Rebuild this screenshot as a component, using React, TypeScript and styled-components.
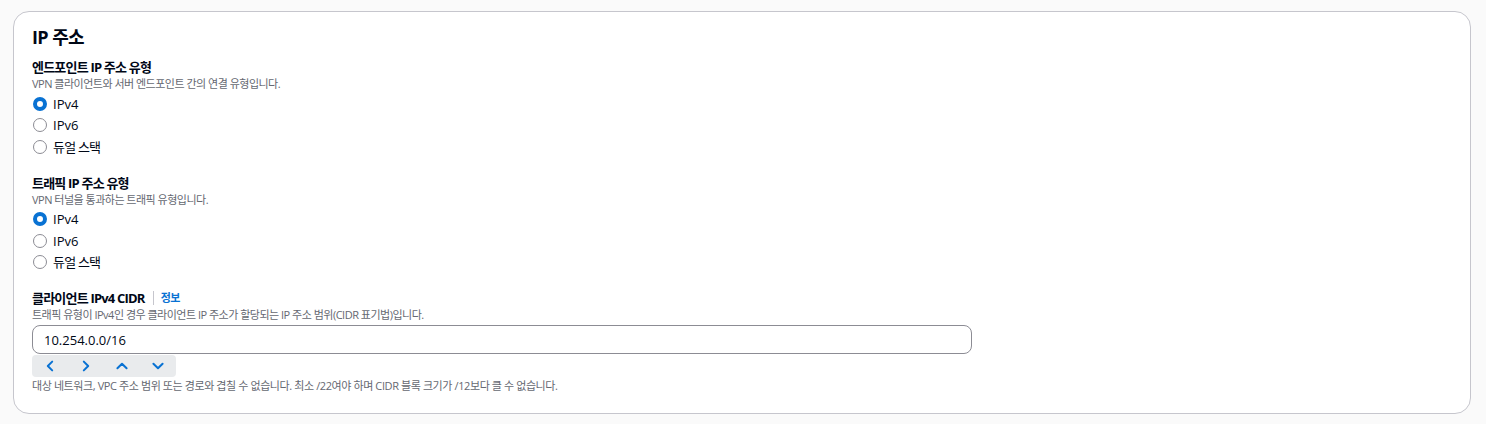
import React from "react";
import styled, { createGlobalStyle } from "styled-components";

const Global = createGlobalStyle`
  html, body { margin: 0; padding: 0; background: #fafafa; }
  body { font-family: "Open Sans", "Noto Sans CJK KR", sans-serif; color: #000716; }
`;

const Page = styled.div`
  padding: 11px 15px 12px 13px;
`;

const Card = styled.section`
  background: #ffffff;
  border: 1px solid #c6c6cd;
  border-radius: 16px;
  padding: 14px 18px 19px 18px;
  display: flex;
  flex-direction: column;
`;

const Heading = styled.h2`
  margin: 0 0 10px 0;
  font-size: 18px;
  line-height: 22px;
  font-weight: 700;
  letter-spacing: -0.6px;
`;

const Field = styled.div<{ $gap?: number }>`
  display: flex;
  flex-direction: column;
  margin-bottom: ${(p) => p.$gap ?? 0}px;
`;

const LabelRow = styled.div`
  display: flex;
  align-items: center;
  font-size: 13px;
  line-height: 18px;
  font-weight: 700;
  letter-spacing: -0.8px;
`;

const InfoSep = styled.span`
  display: inline-block;
  width: 1px;
  height: 14px;
  background: #c6c6cd;
  margin: 0 7px 0 8px;
`;

const InfoLink = styled.span`
  color: #0972d3;
  font-size: 11px;
  font-weight: 700;
  letter-spacing: -0.5px;
`;

const Desc = styled.div`
  font-size: 11px;
  line-height: 16px;
  color: #656871;
  letter-spacing: -0.5px;
`;

const RadioList = styled.div`
  display: flex;
  flex-direction: column;
  margin-top: 1px;
`;

const RadioRow = styled.label`
  display: flex;
  align-items: center;
  height: 21.5px;
  font-size: 13px;
  line-height: 16px;
  gap: 6px;
  padding-left: 1px;
`;

const OptionText = styled.span<{ $ko?: boolean }>`
  letter-spacing: ${(p) => (p.$ko ? "-0.8px" : "0")};
`;

const RadioCircle = styled.span<{ $checked?: boolean }>`
  box-sizing: border-box;
  width: 14px;
  height: 14px;
  border-radius: 50%;
  border: ${(p) => (p.$checked ? "4.5px solid #0972d3" : "1px solid #8c8c94")};
  background: #fff;
  flex-shrink: 0;
`;

const Input = styled.div`
  box-sizing: border-box;
  margin-top: 2px;
  width: 940px;
  height: 29px;
  border: 1px solid #8c8c94;
  border-radius: 8px;
  display: flex;
  align-items: center;
  padding-left: 11px;
  font-size: 13px;
`;

const Toolbar = styled.div`
  display: grid;
  grid-template-columns: repeat(4, 36px);
  width: 144px;
  height: 22px;
  background: #e9ebed;
  border-radius: 4px;
  margin-top: 1px;
`;

const ToolBtn = styled.span`
  display: flex;
  align-items: center;
  justify-content: center;
`;

const Constraint = styled.div`
  font-size: 11px;
  line-height: 16px;
  color: #656871;
  margin-top: 1px;
  letter-spacing: -0.4px;
`;

const Chevron = ({ d }: { d: string }) => (
  <svg width="14" height="14" viewBox="0 0 14 14" fill="none">
    <path d={d} stroke="#0972d3" strokeWidth="2" strokeLinecap="round" strokeLinejoin="round" />
  </svg>
);

const RadioGroup = ({ options, checked }: { options: string[]; checked: number }) => (
  <RadioList>
    {options.map((o, i) => (
      <RadioRow key={o}>
        <RadioCircle $checked={i === checked} />
        <OptionText $ko={!/^[A-Za-z0-9]/.test(o)}>{o}</OptionText>
      </RadioRow>
    ))}
  </RadioList>
);

export default function App() {
  const opts = ["IPv4", "IPv6", "듀얼 스택"];
  return (
    <>
      <Global />
      <Page>
        <Card>
          <Heading>IP 주소</Heading>
          <Field $gap={16}>
            <LabelRow>엔드포인트 IP 주소 유형</LabelRow>
            <Desc>VPN 클라이언트와 서버 엔드포인트 간의 연결 유형입니다.</Desc>
            <RadioGroup options={opts} checked={0} />
          </Field>
          <Field $gap={16}>
            <LabelRow>트래픽 IP 주소 유형</LabelRow>
            <Desc>VPN 터널을 통과하는 트래픽 유형입니다.</Desc>
            <RadioGroup options={opts} checked={0} />
          </Field>
          <Field>
            <LabelRow>
              클라이언트 IPv4 CIDR
              <InfoSep />
              <InfoLink>정보</InfoLink>
            </LabelRow>
            <Desc>트래픽 유형이 IPv4인 경우 클라이언트 IP 주소가 할당되는 IP 주소 범위(CIDR 표기법)입니다.</Desc>
            <Input>10.254.0.0/16</Input>
            <Toolbar>
              <ToolBtn><Chevron d="M9.2 2.6 4.8 7l4.4 4.4" /></ToolBtn>
              <ToolBtn><Chevron d="M4.8 2.6 9.2 7l-4.4 4.4" /></ToolBtn>
              <ToolBtn><Chevron d="M2.4 9.3 7 4.7l4.6 4.6" /></ToolBtn>
              <ToolBtn><Chevron d="M2.4 4.7 7 9.3l4.6-4.6" /></ToolBtn>
            </Toolbar>
            <Constraint>대상 네트워크, VPC 주소 범위 또는 경로와 겹칠 수 없습니다. 최소 /22여야 하며 CIDR 블록 크기가 /12보다 클 수 없습니다.</Constraint>
          </Field>
        </Card>
      </Page>
    </>
  );
}
